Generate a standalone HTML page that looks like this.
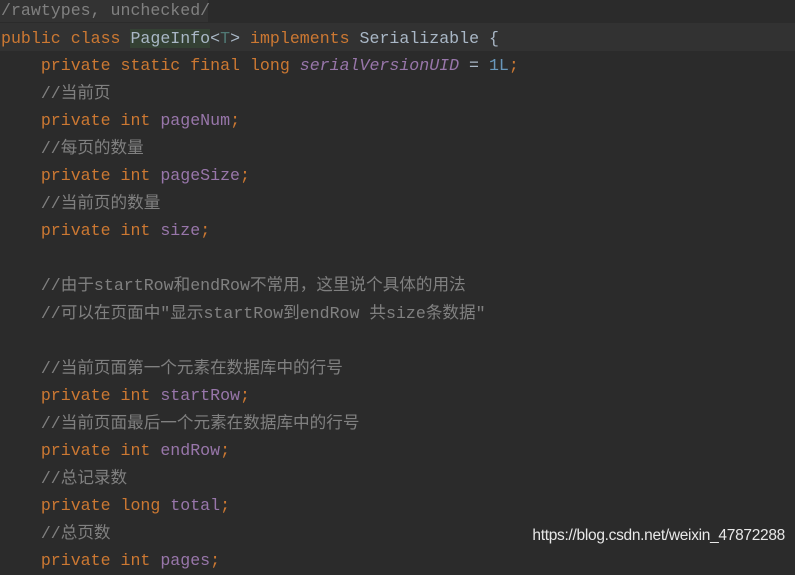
<!DOCTYPE html>
<html><head><meta charset="utf-8"><style>
body{margin:0;width:795px;height:556px;overflow:hidden;background:#2b2b2b;}
.c{position:absolute;left:1px;top:0;font-family:"Liberation Mono","Noto Sans CJK SC",monospace;font-size:16.6px;color:#a9b7c6;}
.l{height:27.5px;line-height:27.5px;white-space:pre;}
.k{color:#cc7832}.f{color:#9876aa}.i{font-style:italic}.n{color:#6897bb}.m{color:#808080}
.cur{position:absolute;left:0;top:23px;width:795px;height:27.5px;background:#323232}
.top{position:absolute;left:0;top:0;width:208px;height:22px;background:#333333}
.w{position:absolute;right:10px;top:527px;font-family:"Liberation Sans",sans-serif;font-size:15.5px;color:#e8e8e8;letter-spacing:-0.3px;}
</style></head><body>
<div class="top"></div><div class="cur"></div>
<div class="c" style="top:-3px"><div class="l m">/rawtypes, unchecked/</div><div class="l"><span class="k">public class </span><span style="background:#344134">PageInfo</span>&lt;<span style="color:#507874">T</span>&gt; <span class="k">implements </span>Serializable {</div><div class="l">    <span class="k">private static final long </span><span class="f i">serialVersionUID</span> = <span class="n">1L</span><span class="k">;</span></div><div class="l m">    //当前页</div><div class="l">    <span class="k">private int </span><span class="f">pageNum</span><span class="k">;</span></div><div class="l m">    //每页的数量</div><div class="l">    <span class="k">private int </span><span class="f">pageSize</span><span class="k">;</span></div><div class="l m">    //当前页的数量</div><div class="l">    <span class="k">private int </span><span class="f">size</span><span class="k">;</span></div><div class="l"> </div><div class="l m">    //由于startRow和endRow不常用，这里说个具体的用法</div><div class="l m">    //可以在页面中"显示startRow到endRow 共size条数据"</div><div class="l"> </div><div class="l m">    //当前页面第一个元素在数据库中的行号</div><div class="l">    <span class="k">private int </span><span class="f">startRow</span><span class="k">;</span></div><div class="l m">    //当前页面最后一个元素在数据库中的行号</div><div class="l">    <span class="k">private int </span><span class="f">endRow</span><span class="k">;</span></div><div class="l m">    //总记录数</div><div class="l">    <span class="k">private long </span><span class="f">total</span><span class="k">;</span></div><div class="l m">    //总页数</div><div class="l">    <span class="k">private int </span><span class="f">pages</span><span class="k">;</span></div></div>
<div class="w">https://blog.csdn.net/weixin_47872288</div>
</body></html>
